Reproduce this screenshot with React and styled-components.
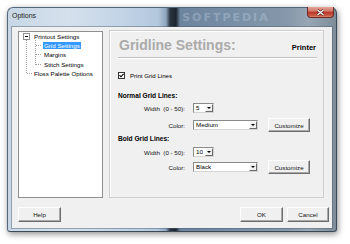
import React from 'react';
import styled, { createGlobalStyle } from 'styled-components';

const Global = createGlobalStyle`
  html, body { margin: 0; padding: 0; background: #ffffff; }
  body { font-family: "Liberation Sans", Arial, sans-serif; color: #000; }
`;

const Stage = styled.div`
  width: 350px;
  height: 244px;
  box-sizing: border-box;
  padding: 7px 13px 12px 7px;
  background: #fff;
`;

const Window = styled.div`
  width: 330px;
  height: 225px;
  box-sizing: border-box;
  border: 1px solid #55687b;
  border-right-color: #3c4a58;
  border-bottom-color: #3c4a58;
  border-radius: 6px 6px 3px 3px;
  padding: 0 4px 3px 4px;
  display: flex;
  flex-direction: column;
  box-shadow: 1px 2px 6px rgba(0, 0, 0, 0.45);
  background: linear-gradient(
    90deg,
    #c8d7e6 0px,
    #d4e0ec 60px,
    #c4d5e7 110px,
    #b3c7dd 150px,
    #8ea6bf 158px,
    #2a3540 162px,
    #1b242d 168px,
    #6d849e 172px,
    #7a90a7 230px,
    #8698aa 280px,
    #98a7b5 300px,
    #7d8a97 330px
  );
`;

const TitleBar = styled.div`
  height: 19px;
  display: flex;
  align-items: flex-start;
  flex-shrink: 0;
`;

const Title = styled.span`
  font-size: 7px;
  line-height: 9px;
  padding-top: 3px;
  color: #1a1a1a;
`;

const Watermark = styled.span`
  margin-left: 146px;
  padding-top: 4px;
  font-size: 11px;
  line-height: 12px;
  font-weight: bold;
  letter-spacing: 2px;
  color: rgba(185, 203, 222, 0.4);
  font-family: "DejaVu Sans", sans-serif;
`;

const Spacer = styled.div`
  flex: 1;
`;

const CloseButton = styled.div`
  width: 27px;
  height: 11px;
  margin-top: -1px;
  margin-right: -2px;
  box-sizing: border-box;
  border: 1px solid #6b2b24;
  border-top: none;
  border-radius: 0 0 4px 4px;
  background: linear-gradient(#e3a699 0%, #d2786a 40%, #b93a2c 55%, #c95a45 85%, #e08a70 100%);
  display: flex;
  align-items: center;
  justify-content: center;
`;

const Client = styled.div`
  flex: 1;
  background: #f0f0f0;
  box-shadow: 0 0 0 1px rgba(70, 90, 110, 0.45);
  padding: 3px 3px 0 6px;
  display: flex;
  flex-direction: column;
`;

const Main = styled.div`
  display: flex;
  gap: 6px;
  height: 168px;
  margin-right: 5px;
  align-items: flex-start;
`;

const TreeBox = styled.div`
  position: relative;
  width: 85px;
  height: 167px;
  margin-top: 1px;
  box-sizing: border-box;
  border: 1px solid #8e8f8f;
  background: #fff;
`;

const TreeLines = styled.svg`
  position: absolute;
  left: 0;
  top: 0;
  pointer-events: none;
`;

const TreeRow = styled.div`
  height: 9.2px;
  display: flex;
  align-items: center;
  padding-left: ${(p) => (p.$level === 1 ? 24 : 4)}px;
  font-size: 6.2px;
  white-space: nowrap;
`;

const Expander = styled.span`
  width: 7px;
  height: 7px;
  box-sizing: border-box;
  border: 1px solid #8f8f8f;
  background: #fff;
  display: flex;
  align-items: center;
  justify-content: center;
  margin-right: 3px;
  visibility: ${(p) => (p.$hidden ? 'hidden' : 'visible')};
  &::after {
    content: '';
    width: 3px;
    height: 1px;
    background: #000;
  }
`;

const TreeLabel = styled.span`
  display: inline-block;
  line-height: 7px;
  padding: 0 1px;
  background: ${(p) => (p.$selected ? '#3399ff' : 'transparent')};
  color: ${(p) => (p.$selected ? '#fff' : '#000')};
`;

const Panel = styled.div`
  width: 215px;
  height: 168px;
  box-sizing: border-box;
  border: 1px solid #cdcdcd;
  box-shadow: inset 1px 1px 0 #fff;
  padding: 6px 6px 0 8px;
  display: flex;
  flex-direction: column;
`;

const Header = styled.div`
  display: flex;
  justify-content: space-between;
  align-items: baseline;
  padding-bottom: 4px;
  border-bottom: 1px solid #c2c2c2;
  box-shadow: 0 1px 0 #fff;
`;

const HeaderTitle = styled.span`
  font-size: 14px;
  line-height: 16px;
  font-weight: bold;
  color: #ababab;
  padding-left: 1px;
`;

const HeaderTag = styled.span`
  font-size: 7.5px;
  font-weight: bold;
  color: #000;
  padding-right: 1px;
`;

const CheckRow = styled.label`
  display: flex;
  align-items: center;
  gap: 5px;
  height: 8px;
  margin-top: 13px;
  font-size: 6.1px;
`;

const CheckBox = styled.span`
  width: 7px;
  height: 7px;
  box-sizing: border-box;
  border: 1px solid #333;
  background: #fff;
  display: flex;
  align-items: center;
  justify-content: center;
`;

const SectionTitle = styled.div`
  font-size: 6.6px;
  font-weight: bold;
  line-height: 8px;
  height: 8px;
  margin-top: ${(p) => p.$mt}px;
`;

const FieldRow = styled.div`
  display: flex;
  align-items: center;
  height: ${(p) => p.$h}px;
  margin-top: ${(p) => p.$mt}px;
  font-size: 6.2px;
`;

const FieldLabel = styled.span`
  width: 67px;
  margin-right: 8px;
  text-align: right;
  white-space: pre;
  color: #111;
`;

const Select = styled.div`
  width: ${(p) => p.$w}px;
  height: 10px;
  box-sizing: border-box;
  border: 1px solid;
  border-color: #8a8a8a #d4d4d4 #d4d4d4 #8a8a8a;
  background: #fff;
  display: flex;
  align-items: center;
  padding-left: 2px;
  line-height: 8px;
`;

const DropButton = styled.span`
  margin-left: auto;
  width: 8px;
  height: 8px;
  box-sizing: border-box;
  background: #f0f0f0;
  border: 1px solid;
  border-color: #fff #6a6a6a #6a6a6a #fff;
  display: flex;
  align-items: center;
  justify-content: center;
  &::after {
    content: '';
    width: 0;
    height: 0;
    border-left: 2px solid transparent;
    border-right: 2px solid transparent;
    border-top: 2px solid #000;
  }
`;

const Button = styled.div`
  width: ${(p) => p.$w}px;
  height: ${(p) => p.$h || 15}px;
  margin-left: ${(p) => p.$ml || 0}px;
  box-sizing: border-box;
  background: #f0f0f0;
  border: 1px solid;
  border-color: #fdfdfd #6d6d6d #6d6d6d #fdfdfd;
  box-shadow: inset -1px -1px 0 #a9a9a9;
  display: flex;
  align-items: center;
  justify-content: center;
  font-size: 6.2px;
  color: #111;
`;

const Footer = styled.div`
  display: flex;
  justify-content: space-between;
  margin-top: 9px;
`;

const ButtonGroup = styled.div`
  display: flex;
  gap: 4px;
`;

const treeItems = [
  { label: 'Printout Settings', level: 0, box: true },
  { label: 'Grid Settings', level: 1, selected: true },
  { label: 'Margins', level: 1 },
  { label: 'Stitch Settings', level: 1 },
  { label: 'Floss Palette Options', level: 0 },
];

function ColorField({ value, mt }) {
  return (
    <FieldRow $h={14} $mt={mt}>
      <FieldLabel>Color:</FieldLabel>
      <Select $w={65}>
        {value}
        <DropButton />
      </Select>
      <Button $w={42} $h={14} $ml={10}>Customize</Button>
    </FieldRow>
  );
}

function WidthField({ value, mt }) {
  return (
    <FieldRow $h={10} $mt={mt}>
      <FieldLabel>{'Width  (0 - 50):'}</FieldLabel>
      <Select $w={21}>
        {value}
        <DropButton />
      </Select>
    </FieldRow>
  );
}

export default function App() {
  return (
    <>
      <Global />
      <Stage>
        <Window>
          <TitleBar>
            <Title>Options</Title>
            <Watermark>SOFTPEDIA</Watermark>
            <Spacer />
            <CloseButton>
              <svg width="9" height="7" viewBox="0 0 9 7">
                <path d="M1.5 1 L7.5 6 M7.5 1 L1.5 6" stroke="#4a1a14" strokeWidth="2.6" />
                <path d="M1.5 1 L7.5 6 M7.5 1 L1.5 6" stroke="#fff" strokeWidth="1.4" />
              </svg>
            </CloseButton>
          </TitleBar>
          <Client>
            <Main>
              <TreeBox>
                <TreeLines width="83" height="60" shapeRendering="crispEdges">
                  <g stroke="#a0a0a0" strokeWidth="1" strokeDasharray="1 1" fill="none">
                    <path d="M7.5 8 V41.5 H13" />
                    <path d="M16.5 8 V32.5" />
                    <path d="M16.5 13.5 H23" />
                    <path d="M16.5 22.5 H23" />
                    <path d="M16.5 32.5 H23" />
                  </g>
                </TreeLines>
                {treeItems.map((it) => (
                  <TreeRow key={it.label} $level={it.level}>
                    {it.level === 0 && <Expander $hidden={!it.box} />}
                    <TreeLabel $selected={it.selected}>{it.label}</TreeLabel>
                  </TreeRow>
                ))}
              </TreeBox>
              <Panel>
                <Header>
                  <HeaderTitle>Gridline Settings:</HeaderTitle>
                  <HeaderTag>Printer</HeaderTag>
                </Header>
                <CheckRow>
                  <CheckBox>
                    <svg width="5" height="5" viewBox="0 0 5 5">
                      <path d="M0.5 2.2 L2 3.8 L4.6 0.8" stroke="#000" strokeWidth="1.1" fill="none" />
                    </svg>
                  </CheckBox>
                  Print Grid Lines
                </CheckRow>
                <SectionTitle $mt={13}>Normal Grid Lines:</SectionTitle>
                <WidthField value="5" mt={3} />
                <ColorField value="Medium" mt={5} />
                <SectionTitle $mt={3}>Bold Grid Lines:</SectionTitle>
                <WidthField value="10" mt={4} />
                <ColorField value="Black" mt={3} />
              </Panel>
            </Main>
            <Footer>
              <Button $w={43}>Help</Button>
              <ButtonGroup>
                <Button $w={43}>OK</Button>
                <Button $w={42}>Cancel</Button>
              </ButtonGroup>
            </Footer>
          </Client>
        </Window>
      </Stage>
    </>
  );
}
